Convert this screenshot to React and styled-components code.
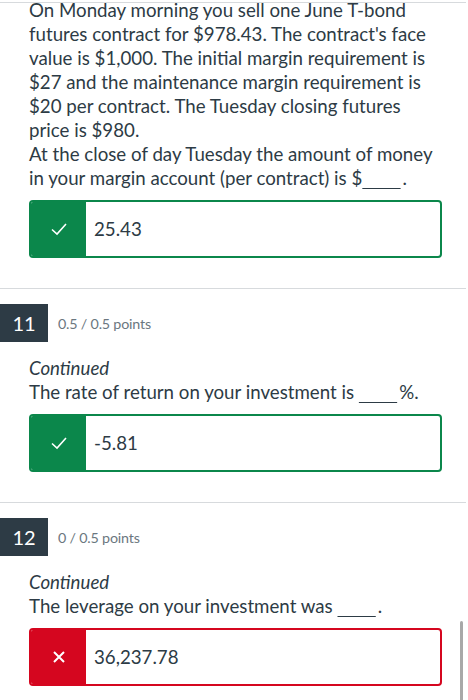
import React from "react";
import styled, { createGlobalStyle } from "styled-components";

const Global = createGlobalStyle`
  html, body { margin: 0; padding: 0; background: #fff; }
  body { font-family: Lato, "Open Sans", Arial, sans-serif; color: #2d3b45; overflow: hidden; }
`;

const Page = styled.div`
  position: relative;
  width: 468px;
  height: 700px;
  overflow: hidden;
`;

const TopRule = styled.div`
  margin-top: 2px;
  width: 466px;
  border-top: 1px solid #d7dadd;
`;

const Question = styled.section`
  display: flex;
  flex-direction: column;
`;

const Header = styled.div`
  display: flex;
  align-items: center;
  gap: 10px;
  margin-top: 15px;
`;

const Badge = styled.div`
  width: 48px;
  height: 38px;
  background: #2d3b45;
  color: #fff;
  font-size: 20px;
  display: flex;
  align-items: center;
  justify-content: center;
`;

const Points = styled.span`
  font-size: 14.3px;
  color: #6b7780;
  letter-spacing: -0.2px;
`;

const Body = styled.div`
  display: flex;
  flex-direction: column;
  padding-left: 29px;
  margin-top: ${(p) => p.$top || 0}px;
  font-size: 18.7px;
  line-height: 24px;
  width: 405px;
`;

const Para = styled.p`
  margin: 0;
  font-style: ${(p) => (p.$italic ? "italic" : "normal")};
`;

const Blank = styled.span`
  text-decoration: underline;
  text-decoration-thickness: 1px;
  text-underline-offset: 3px;
  white-space: pre;
  margin-right: 2px;
`;

const Answer = styled.div`
  display: flex;
  margin: ${(p) => p.$mt}px 0 0 29px;
  width: 413px;
  height: 58px;
  box-sizing: border-box;
  border: 2px solid ${(p) => p.$color};
  border-radius: 4px;
  overflow: hidden;
`;

const Mark = styled.div`
  width: 55px;
  background: ${(p) => p.$color};
  display: flex;
  align-items: center;
  justify-content: center;
`;

const Value = styled.div`
  flex: 1;
  display: flex;
  align-items: center;
  padding-left: 8px;
  font-size: 18.7px;
  color: #2d3b45;
`;

const Separator = styled.hr`
  margin: 30px 0 0 0;
  width: 466px;
  border: 0;
  border-top: 1px solid #d7dadd;
  height: 0;
`;

const Scrollbar = styled.div`
  position: absolute;
  left: 460px;
  top: 621px;
  width: 3px;
  height: 90px;
  border-radius: 2px;
  background: #a8a8a8;
`;

const GREEN = "#0b874b";
const RED = "#d5061f";
const GAP = "\u00a0".repeat(8);

const Check = () => (
  <svg width="18" height="14" viewBox="0 0 18 14">
    <polyline points="2,7.5 7,12 16,2" fill="none" stroke="#fff" strokeWidth="1.6" strokeLinejoin="miter" />
  </svg>
);

const Cross = () => (
  <svg width="12" height="12" viewBox="0 0 12 12">
    <path d="M1 1 L11 11 M11 1 L1 11" stroke="#fff" strokeWidth="2" />
  </svg>
);

const AnswerBox = ({ ok, value, mt }) => {
  const color = ok ? GREEN : RED;
  return (
    <Answer $color={color} $mt={mt}>
      <Mark $color={color}>{ok ? <Check /> : <Cross />}</Mark>
      <Value>{value}</Value>
    </Answer>
  );
};

export default function App() {
  return (
    <Page>
      <Global />
      <TopRule />
      <Question>
        <Body $top={-5}>
          <Para>
            On Monday morning you sell one June T-bond futures contract for $978.43. The contract's face
            value is $1,000. The initial margin requirement is $27 and the maintenance margin requirement is
            $20 per contract. The Tuesday closing futures price is $980.
          </Para>
          <Para>
            At the close of day Tuesday the amount of money in your margin account (per contract) is $<Blank>{GAP}</Blank>.
          </Para>
        </Body>
        <AnswerBox ok value="25.43" mt={10} />
        <Separator />
      </Question>
      <Question>
        <Header>
          <Badge>11</Badge>
          <Points>0.5 / 0.5 points</Points>
        </Header>
        <Body $top={14}>
          <Para $italic>Continued</Para>
          <Para>
            The rate of return on your investment is <Blank>{GAP}</Blank>%.
          </Para>
        </Body>
        <AnswerBox ok value="-5.81" mt={10} />
        <Separator />
      </Question>
      <Question>
        <Header>
          <Badge>12</Badge>
          <Points>0 / 0.5 points</Points>
        </Header>
        <Body $top={14}>
          <Para $italic>Continued</Para>
          <Para>
            The leverage on your investment was <Blank>{GAP}</Blank>.
          </Para>
        </Body>
        <AnswerBox ok={false} value="36,237.78" mt={10} />
      </Question>
      <Scrollbar />
    </Page>
  );
}
